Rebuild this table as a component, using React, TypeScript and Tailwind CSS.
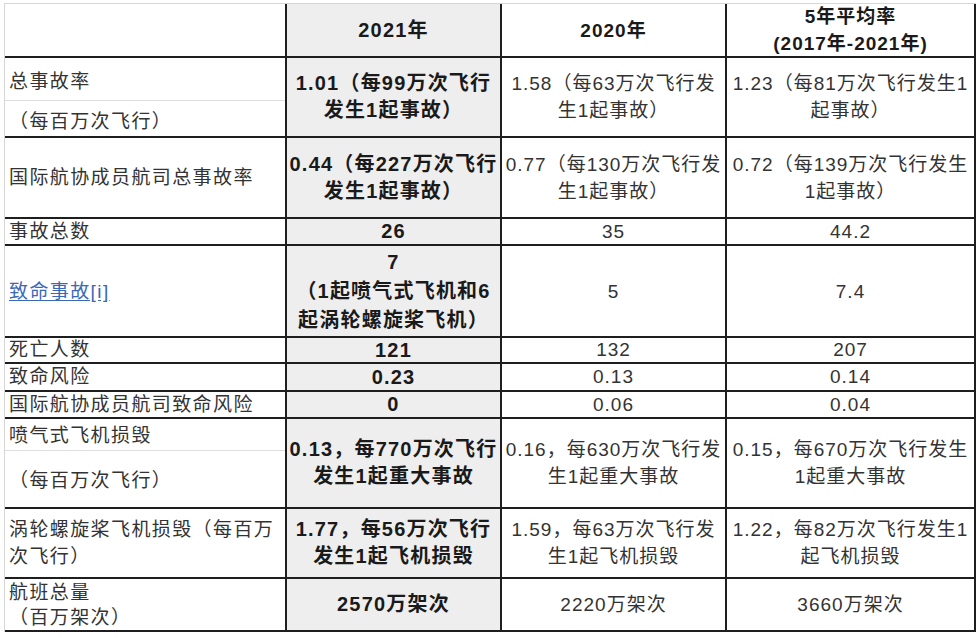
import React from "react";

const LINE = "border-[#1e1e1e]";

type CellProps = { children?: React.ReactNode; bold?: boolean; gray?: boolean; lh?: string };

function Val({ children, bold, gray, lh }: CellProps) {
  return (
    <div
      className={`flex items-center justify-center text-center whitespace-nowrap overflow-hidden border-r-2 ${LINE} ${
        gray ? "bg-[#eeeeee] text-[20px] tracking-[1.2px]" : "bg-white"
      } ${bold ? "font-bold text-[#1a1a1a]" : "font-normal text-[#333333]"} ${lh ?? "leading-[27px]"}`}
    >
      <div>{children}</div>
    </div>
  );
}

function Label({ children, lh }: { children: React.ReactNode; lh?: string }) {
  return (
    <div
      className={`flex items-center justify-start pl-[4px] whitespace-nowrap overflow-hidden border-r-2 ${LINE} bg-white text-[#333333] tracking-[1.4px] ${lh ?? "leading-[27px]"}`}
    >
      <div>{children}</div>
    </div>
  );
}

function SplitLabel({ top, bottom, topH, pad }: { top: React.ReactNode; bottom: React.ReactNode; topH: string; pad: string }) {
  return (
    <div className={`flex flex-col border-r-2 ${LINE} bg-white text-[#333333] tracking-[1.4px] whitespace-nowrap overflow-hidden`}>
      <div className={`${topH} ${pad} flex items-center pl-[4px] border-b border-[#dedede]`}>{top}</div>
      <div className={`flex-1 ${pad} flex items-center pl-[4px]`}>{bottom}</div>
    </div>
  );
}

function Row({ h, children }: { h: string; children: React.ReactNode }) {
  return (
    <div className={`grid grid-cols-[282px_215px_225px_249px] ${h} border-b-2 ${LINE}`}>{children}</div>
  );
}

export default function App() {
  return (
    <div
      className="w-[978px] h-[638px] bg-white overflow-hidden text-[19px] tracking-[1px]"
      style={{ fontFamily: '"Liberation Sans", "Noto Sans CJK SC", sans-serif' }}
    >
      <div className="ml-[4px] mt-[3px] w-[972px] border-l border-t border-[#d6d6d6]">
        <Row h="h-[54px]">
          <Label>{""}</Label>
          <Val bold gray>2021年</Val>
          <Val bold>2020年</Val>
          <Val bold>
            5年平均率
            <br />
            (2017年-2021年)
          </Val>
        </Row>
        <Row h="h-[80px]">
          <SplitLabel topH="h-[43px]" pad="pt-[7px]" top="总事故率" bottom="（每百万次飞行）" />
          <Val bold gray>
            1.01（每99万次飞行
            <br />
            发生1起事故）
          </Val>
          <Val>
            1.58（每63万次飞行发
            <br />
            生1起事故）
          </Val>
          <Val>
            1.23（每81万次飞行发生1
            <br />
            起事故）
          </Val>
        </Row>
        <Row h="h-[81px]">
          <Label>国际航协成员航司总事故率</Label>
          <Val bold gray>
            0.44（每227万次飞行
            <br />
            发生1起事故）
          </Val>
          <Val>
            0.77（每130万次飞行发
            <br />
            生1起事故）
          </Val>
          <Val>
            0.72（每139万次飞行发生
            <br />
            1起事故）
          </Val>
        </Row>
        <Row h="h-[27px]">
          <Label lh="leading-[25px]">事故总数</Label>
          <Val bold gray lh="leading-[25px]">26</Val>
          <Val lh="leading-[25px]">35</Val>
          <Val lh="leading-[25px]">44.2</Val>
        </Row>
        <Row h="h-[92px]">
          <Label>
            <span className="text-[#3a68b8] underline underline-offset-2">致命事故[i]</span>
          </Label>
          <Val bold gray lh="leading-[29px]">
            7
            <br />
            （1起喷气式飞机和6
            <br />
            起涡轮螺旋桨飞机）
          </Val>
          <Val>5</Val>
          <Val>7.4</Val>
        </Row>
        <Row h="h-[26px]">
          <Label lh="leading-[24px]">死亡人数</Label>
          <Val bold gray lh="leading-[24px]">121</Val>
          <Val lh="leading-[24px]">132</Val>
          <Val lh="leading-[24px]">207</Val>
        </Row>
        <Row h="h-[28px]">
          <Label lh="leading-[26px]">致命风险</Label>
          <Val bold gray lh="leading-[26px]">0.23</Val>
          <Val lh="leading-[26px]">0.13</Val>
          <Val lh="leading-[26px]">0.14</Val>
        </Row>
        <Row h="h-[27px]">
          <Label lh="leading-[25px]">国际航协成员航司致命风险</Label>
          <Val bold gray lh="leading-[25px]">0</Val>
          <Val lh="leading-[25px]">0.06</Val>
          <Val lh="leading-[25px]">0.04</Val>
        </Row>
        <Row h="h-[90px]">
          <SplitLabel topH="h-[32px]" pad="pt-[4px]" top="喷气式飞机损毁" bottom="（每百万次飞行）" />
          <Val bold gray>
            0.13，每770万次飞行
            <br />
            发生1起重大事故
          </Val>
          <Val>
            0.16，每630万次飞行发
            <br />
            生1起重大事故
          </Val>
          <Val>
            0.15，每670万次飞行发生
            <br />
            1起重大事故
          </Val>
        </Row>
        <Row h="h-[70px]">
          <Label>
            涡轮螺旋桨飞机损毁（每百万
            <br />
            次飞行）
          </Label>
          <Val bold gray>
            1.77，每56万次飞行
            <br />
            发生1起飞机损毁
          </Val>
          <Val>
            1.59，每63万次飞行发
            <br />
            生1起飞机损毁
          </Val>
          <Val>
            1.22，每82万次飞行发生1
            <br />
            起飞机损毁
          </Val>
        </Row>
        <Row h="h-[53px]">
          <Label lh="leading-[25px]">
            航班总量
            <br />
            （百万架次）
          </Label>
          <Val bold gray>2570万架次</Val>
          <Val>2220万架次</Val>
          <Val>3660万架次</Val>
        </Row>
      </div>
    </div>
  );
}
